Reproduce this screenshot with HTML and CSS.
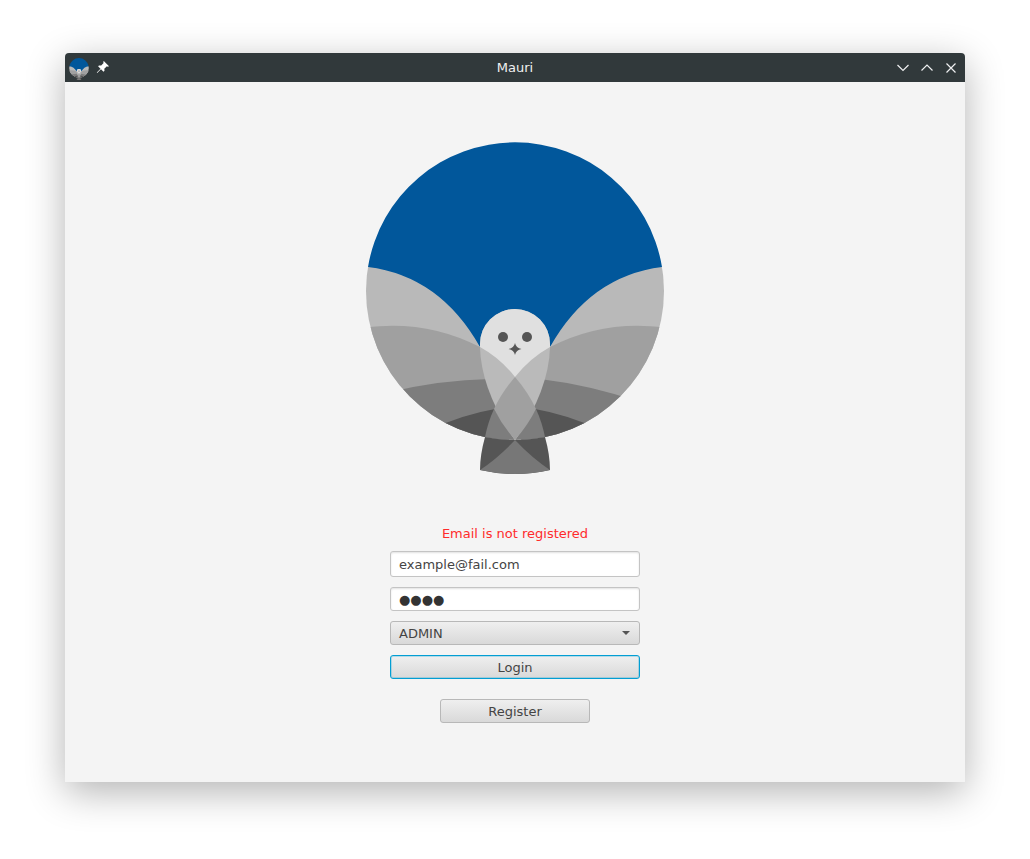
FILE: index.html
```html
<!DOCTYPE html>
<html lang="en">
<head>
  <meta charset="UTF-8">
  <title>Mauri</title>
  <link rel="stylesheet" href="styles.css">
</head>
<body>
  <svg class="defs" width="0" height="0">
    <defs>
      <clipPath id="disc"><circle cx="515" cy="291" r="149"/></clipPath>
      <symbol id="owl" viewBox="365 141 300 334">
        <path d="M368 267 A149 149 0 0 1 662 267 L550 347 L515 380 L480 347Z" fill="#01579b"/>
        <g clip-path="url(#disc)">
          <!-- left wing -->
          <path d="M350 262 L368 267 Q440 276 480 347 L515 460 L350 460Z" fill="#b9b9b9"/>
          <path d="M350 330 Q420 316 480 347 L515 460 L350 460Z" fill="#a0a0a0"/>
          <path d="M390 392 Q440 380 490 379 L515 460 L390 460Z" fill="#7d7d7d"/>
          <path d="M430 430 Q460 415 500 408 L515 460 L430 460Z" fill="#555"/>
          <!-- right wing -->
          <path d="M680 262 L662 267 Q590 276 550 347 L515 460 L680 460Z" fill="#b9b9b9"/>
          <path d="M680 330 Q610 316 550 347 L515 460 L680 460Z" fill="#a0a0a0"/>
          <path d="M640 402 Q590 385 540 379 L515 460 L640 460Z" fill="#7d7d7d"/>
          <path d="M600 430 Q570 415 530 408 L515 460 L600 460Z" fill="#555"/>
        </g>
        <!-- tail -->
        <path d="M485 437 Q500 440 515 440 Q530 440 545 437 Q550 455 550 470 Q515 478 480 470 Q480 455 485 437Z" fill="#555"/>
        <path d="M515 440 Q532 458 550 470 Q515 478 480 470 Q498 458 515 440Z" fill="#777"/>
        <!-- lower body triangles -->
        <path d="M494 409 Q488 422 485 437 Q500 440 515 440Z" fill="#7d7d7d"/>
        <path d="M536 409 Q542 422 545 437 Q530 440 515 440Z" fill="#7d7d7d"/>
        <!-- head and body -->
        <path d="M480 347 V344 A35 35 0 0 1 550 344 V347 Q549 390 515 440 Q481 390 480 347Z" fill="#bababa"/>
        <path d="M480 344 A35 35 0 0 1 550 344 V347 Q530 358 515 377 Q500 358 480 347Z" fill="#e0e0e0"/>
        <path d="M515 377 Q528 392 536 409 Q528 425 515 440 Q502 425 494 409 Q502 392 515 377Z" fill="#a0a0a0"/>
        <circle cx="503" cy="337" r="5" fill="#555"/>
        <circle cx="527" cy="337" r="5" fill="#555"/>
        <path d="M515 343 Q516 348 521.500 349 Q516 350 515 355 Q514 350 508.500 349 Q514 348 515 343Z" fill="#555"/>
      </symbol>
    </defs>
  </svg>

  <div class="window">
    <div class="titlebar">
      <div class="title-left">
        <svg class="app-icon"><use href="#owl"/></svg>
        <svg class="pin" viewBox="0 0 14 14">
          <path d="M7.800 1 L13 6.200 L11.800 6.800 L10.900 6.300 L8.300 8.700 L8.500 10.800 L7.500 11.700 L5 9.200 L1.200 13 L0.800 12.600 L4.500 8.700 L2.100 6.300 L3 5.400 L5.200 5.600 L7.600 3 L7.200 2.100Z" fill="#fff"/>
        </svg>
      </div>
      <span class="title">Mauri</span>
      <div class="title-right">
        <svg class="win-btn" viewBox="0 0 12 12"><path d="M0.500 3 L6 8.500 L11.500 3"/></svg>
        <svg class="win-btn" viewBox="0 0 12 12"><path d="M0.500 8.500 L6 3 L11.500 8.500"/></svg>
        <svg class="win-btn" viewBox="0 0 12 12"><path d="M1.500 1.500 L10.500 10.500 M10.500 1.500 L1.500 10.500"/></svg>
      </div>
    </div>

    <div class="content">
      <svg class="logo"><use href="#owl"/></svg>
      <div class="error">Email is not registered</div>
      <input class="field field-email" type="text" value="example@fail.com">
      <input class="field field-pass" type="text" value="●●●●">
      <div class="combo">
        <span>ADMIN</span>
        <span class="arrow"></span>
      </div>
      <button class="btn btn-login">Login</button>
      <button class="btn btn-register">Register</button>
    </div>
  </div>
</body>
</html>
```

FILE: styles.css
```css
html, body {
  height: 100%;
}
body {
  margin: 0;
  padding: 53px 65px 0;
  box-sizing: border-box;
  background-color: #fff;
  font-family: "DejaVu Sans", sans-serif;
  font-size: 13px;
  color: #444;
  overflow: hidden;
}
.defs {
  display: block;
  width: 0;
  height: 0;
}
.window {
  width: 900px;
  height: 729px;
  display: flex;
  flex-direction: column;
  background-color: #f4f4f4;
  border-radius: 4px 4px 0 0;
  box-shadow: 0 10px 38px rgba(0,0,0,0.3);
}
.titlebar {
  height: 29px;
  flex-shrink: 0;
  display: flex;
  align-items: center;
  justify-content: space-between;
  padding: 0 8px 0 4px;
  background-color: #31393b;
  border-radius: 4px 4px 0 0;
  color: #fff;
}
.title-left,
.title-right {
  width: 120px;
  display: flex;
  align-items: center;
}
.title-left {
  width: 124px;
  gap: 7px;
}
.title-right {
  justify-content: flex-end;
  gap: 12px;
}
.title {
  font-size: 13px;
  color: #eff0f1;
}
.app-icon {
  width: 20px;
  height: 22px;
  margin-top: 2px;
}
.pin {
  width: 14px;
  height: 14px;
  margin-top: -2px;
}
.win-btn {
  width: 12px;
  height: 12px;
  fill: none;
  stroke: #eff0f1;
  stroke-width: 1.2;
}
.content {
  flex: 1;
  display: flex;
  flex-direction: column;
  align-items: center;
  padding-top: 59px;
}
.logo {
  width: 300px;
  height: 334px;
  flex-shrink: 0;
}
.error {
  margin-top: 50px;
  height: 18px;
  line-height: 18px;
  color: #ff2b2b;
}
.field,
.combo,
.btn {
  width: 250px;
  box-sizing: border-box;
  font-family: "DejaVu Sans", sans-serif;
  font-size: 13px;
  color: #444;
  border-radius: 3px;
}
.field {
  display: block;
  padding: 0 8px;
  background-color: #fff;
  border: 1px solid #c4c4c4;
  box-shadow: inset 0 1px 2px rgba(0,0,0,0.12);
  outline: none;
}
.field-email {
  height: 26px;
  margin-top: 8px;
}
.field-pass {
  height: 24px;
  margin-top: 10px;
  color: #333;
}
.combo {
  height: 24px;
  margin-top: 10px;
  padding: 0 8px;
  display: flex;
  align-items: center;
  justify-content: space-between;
  border: 1px solid #b8b8b8;
  background: linear-gradient(#efefef, #d9d9d9);
}
.arrow {
  width: 0;
  height: 0;
  margin-right: 1px;
  border-left: 4.500px solid transparent;
  border-right: 4.500px solid transparent;
  border-top: 4.500px solid #555;
}
.btn {
  height: 24px;
  padding: 0;
  border: 1px solid #b8b8b8;
  background: linear-gradient(#efefef, #d9d9d9);
}
.btn-login {
  margin-top: 10px;
  border-color: #039ed3;
  box-shadow: inset 0 0 0 1px rgba(3,158,211,0.25);
}
.btn-register {
  width: 150px;
  margin-top: 20px;
}
```
